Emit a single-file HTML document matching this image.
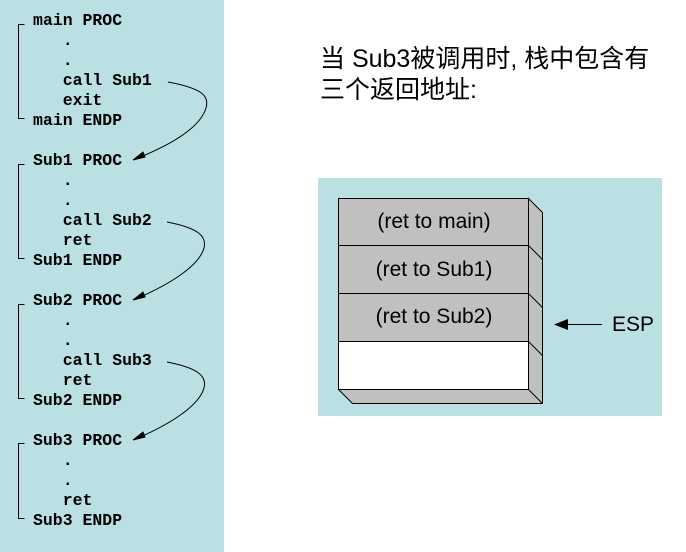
<!DOCTYPE html>
<html><head><meta charset="utf-8"><style>
body{margin:0;width:686px;height:552px;background:#fff;position:relative;overflow:hidden;font-family:"Liberation Sans","Noto Sans CJK SC",sans-serif}
.left{position:absolute;left:0;top:0;width:224px;height:552px;background:#bbe0e3}
.c{position:absolute;font-family:"Liberation Mono",monospace;font-weight:bold;font-size:16.5px;line-height:20px;white-space:pre;color:#000}
.right{position:absolute;left:318px;top:178px;width:344px;height:238px;background:#bbe0e3}
.t{position:absolute;left:320px;font-size:25px;color:#000;white-space:nowrap}
</style></head><body>
<div class="left"></div>
<div class="c" style="left:33px;top:11px">main PROC
   .
   .
   call Sub1
   exit
main ENDP

Sub1 PROC
   .
   .
   call Sub2
   ret
Sub1 ENDP

Sub2 PROC
   .
   .
   call Sub3
   ret
Sub2 ENDP

Sub3 PROC
   .
   .
   ret
Sub3 ENDP</div>
<svg width="686" height="552" style="position:absolute;left:0;top:0" fill="none" stroke="#000" stroke-width="1">
<path d="M24.5 24.5 H18.5 V118.5 H24.5"/>
<path d="M24.5 164.5 H18.5 V258.5 H24.5"/>
<path d="M24.5 304.5 H18.5 V398.5 H24.5"/>
<path d="M24.5 443.5 H18.5 V518.5 H24.5"/>
<path d="M168 82 C200 88 210 95 206 108 C200 128 170 145 138 158"/>
<path d="M167 222 C198 228 207 236 204 248 C199 266 170 284 138 298"/>
<path d="M167 362 C198 368 207 376 204 388 C199 406 170 424 138 438"/>
<polygon points="133,160 143,152 145,157" fill="#000"/>
<polygon points="133,300 143,292 145,297" fill="#000"/>
<polygon points="133,440 143,432 145,437" fill="#000"/>
</svg>
<div class="t" style="top:39px">当 Sub3被调用时, 栈中包含有</div>
<div class="t" style="top:70px">三个返回地址:</div>
<div class="right"></div>
<svg width="686" height="552" style="position:absolute;left:0;top:0">
<polygon points="528.5,198.5 542.5,212.5 542.5,403.5 352.5,403.5 338.5,389.5 528.5,389.5" fill="#c0c0c0" stroke="#000"/>
<path d="M528.5 245.5 L542.5 259.5 M528.5 293.5 L542.5 307.5 M528.5 341.5 L542.5 355.5 M528.5 389.5 L542.5 403.5" stroke="#000"/>
<rect x="338.5" y="198.5" width="190" height="143" fill="#c0c0c0" stroke="#000"/>
<rect x="338.5" y="341.5" width="190" height="48" fill="#fff" stroke="#000"/>
<path d="M338.5 245.5 H528.5 M338.5 293.5 H528.5" stroke="#000"/>
<g font-family="Liberation Sans,sans-serif" font-size="21" text-anchor="middle" fill="#000">
<text x="434" y="228">(ret to main)</text>
<text x="434" y="276">(ret to Sub1)</text>
<text x="434" y="323">(ret to Sub2)</text>
<text x="633" y="331">ESP</text>
</g>
<line x1="565" y1="324.5" x2="602" y2="324.5" stroke="#000"/>
<polygon points="554,324.5 568,319 568,330" fill="#000"/>
</svg>
</body></html>
